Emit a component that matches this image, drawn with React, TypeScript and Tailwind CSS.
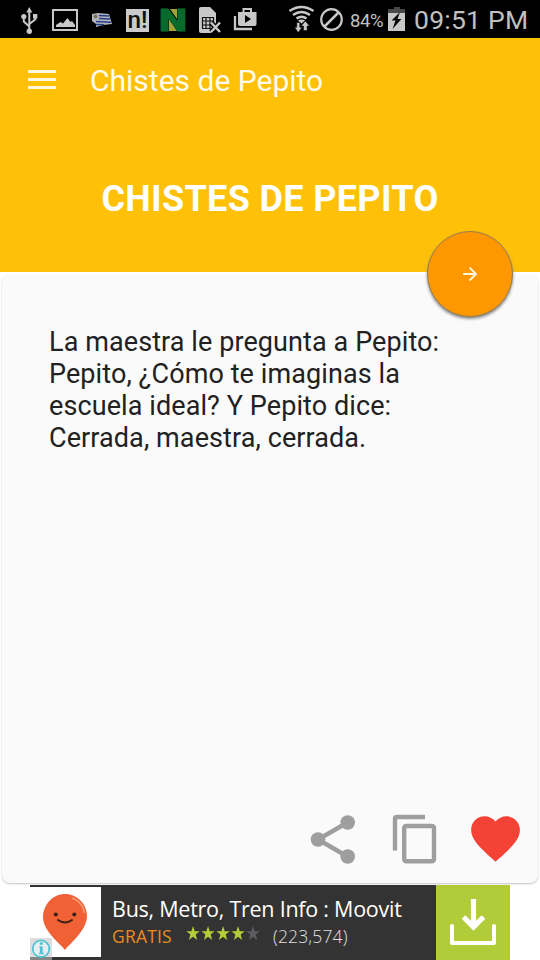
import type { ReactNode } from "react";

const GRAY = "#c8c8c8";

function StatusIcon({ x, w, children }: { x: number; w: number; children: ReactNode }) {
  return (
    <svg width={w} height={38} viewBox={`${x} 0 ${w} 38`} className="shrink-0">
      {children}
    </svg>
  );
}

function StatusBar() {
  return (
    <div className="flex h-[38px] w-full bg-black pl-4 font-[Roboto,sans-serif] text-[#c0c0c0]">
      <StatusIcon x={16} w={29}>
        <g fill="none" stroke={GRAY} strokeWidth="2">
          <path d="M29.300 12v20M23.800 17v4.500l5.500 5M35.200 17v2.500l-5.900 4.500" />
        </g>
        <g fill={GRAY}>
          <path d="M29.300 7l3 5.500h-6z" />
          <circle cx="23.800" cy="16.500" r="2.600" />
          <rect x="33" y="14" width="4.300" height="4.600" />
          <circle cx="29.300" cy="31.300" r="2.700" />
        </g>
      </StatusIcon>
      <StatusIcon x={45} w={40}>
        <rect x="53" y="10" width="24" height="20" fill="none" stroke={GRAY} strokeWidth="2" />
        <path d="M56 27v-2l4.500-3 2.500 1.500 4.500-5.500 3 4 1.500-1 3 4v2z" fill={GRAY} />
      </StatusIcon>
      <StatusIcon x={85} w={35}>
        <path d="M92 14l6-1 11 1 3 10-9 1-7 2 0-3-4-3z" fill="#b4b4bc" />
        <path d="M99 15.500l10 .5M99 18.500l11 .5M96 21.500l15 .8M96 24.500l8 .2" stroke="#263e86" strokeWidth="1.400" />
        <circle cx="95.500" cy="16.500" r="2" fill="#777260" />
      </StatusIcon>
      <StatusIcon x={120} w={35}>
        <rect x="126" y="9" width="23" height="23" fill="#cbcbcb" />
        <text x="127.500" y="28" fontSize="24" fontWeight="500" textLength="20" lengthAdjust="spacingAndGlyphs" fill="#111">n!</text>
      </StatusIcon>
      <StatusIcon x={155} w={38}>
        <path d="M170 9h7v10zM169 31V19l8 12z" fill="#a4a33b" />
        <text x="159" y="31" fontSize="31" fontWeight="900" textLength="28" lengthAdjust="spacingAndGlyphs" fill="#086b2c" stroke="#086b2c" strokeWidth=".8">N</text>
      </StatusIcon>
      <StatusIcon x={193} w={35}>
        <path d="M199 9q0-2 2-2h9l6 6v11l-5 9h-10q-2 0-2-2z" fill={GRAY} />
        <path d="M202.500 17.500h11v11h-11zM206 17v12M210 17v12M202 21h12M202 25h12" fill="none" stroke="#111" strokeWidth="1.200" />
        <path d="M211 22.500l9 9.500M220 22.500l-9 9.500" stroke="#000" strokeWidth="5" />
        <path d="M211 22.500l9 9.500M220 22.500l-9 9.500" stroke={GRAY} strokeWidth="2.500" />
      </StatusIcon>
      <StatusIcon x={228} w={35}>
        <path d="M235 16v13h17" fill="none" stroke={GRAY} strokeWidth="2.300" />
        <path fillRule="evenodd" d="M238 12h18.500v12q0 2-2 2h-14.500q-2 0-2-2zM245 15v8l6-4z" fill={GRAY} />
        <path d="M243.500 12V9h7.500v3" fill="none" stroke={GRAY} strokeWidth="2" />
      </StatusIcon>
      <StatusIcon x={263} w={87}>
        <g fill="none" stroke={GRAY} strokeWidth="2.500">
          <path d="M289.500 11q12-8 24 0M293 15q8.500-6 17 0M296.500 18.500q5-3.500 10 0" />
          <circle cx="331.500" cy="19.500" r="10.300" strokeWidth="2.200" />
          <path d="M324.500 26.500l14-14" />
        </g>
        <path d="M298 20.500q3.500-2 7 0l-3.500 3z" fill={GRAY} />
        <path d="M296.800 22.500h3v4.800h2.200l-3.700 5.200-3.700-5.200h2.200zM303.500 30.500h3.600v-4.500h2.400l-4.200-5-4.200 5h2.400z" fill={GRAY} stroke="#000" strokeWidth=".5" />
      </StatusIcon>
      <div className="w-[34px] shrink-0 whitespace-nowrap pt-[9px] text-[18.500px] leading-[24px] tracking-[-0.400px]">84%</div>
      <StatusIcon x={384} w={30}>
        <rect x="394" y="7" width="6" height="3" fill="#484848" />
        <rect x="388" y="9" width="17" height="22" fill={GRAY} />
        <rect x="388" y="9" width="17" height="4" fill="#484848" />
        <path d="M400 12l-8.500 8.500h4l-3 8.500 9-10h-4z" fill="#080808" />
      </StatusIcon>
      <div className="shrink-0 whitespace-nowrap pt-[4px] text-[26.500px] leading-[32px] tracking-[0.250px]">09:51 PM</div>
    </div>
  );
}

function Header() {
  return (
    <header className="h-[234px] bg-[#ffc107] font-[Roboto,sans-serif] text-white">
      <div className="flex h-[84px] items-center pl-7">
        <div className="mb-[2px] flex w-[62px] flex-col gap-[5px]">
          <i className="h-[3px] w-7 bg-[#fff8df]" />
          <i className="h-[3px] w-7 bg-[#fff8df]" />
          <i className="h-[3px] w-7 bg-[#fff8df]" />
        </div>
        <h1 className="mt-[2px] whitespace-nowrap text-[30px] leading-[36px] text-[#fffbed]">Chistes de Pepito</h1>
      </div>
      <h2 className="mt-[55px] whitespace-nowrap text-center text-[36px] font-bold leading-[44px] tracking-[0.350px]">CHISTES DE PEPITO</h2>
    </header>
  );
}

function JokeCard() {
  return (
    <main className="mx-0.5 mt-[3px] flex h-[608px] flex-col justify-between rounded-lg bg-[#fafafa] shadow-[0_1px_2px_#c4c4c4]">
      <p className="ml-[47px] mt-[51px] whitespace-nowrap font-[Roboto,sans-serif] text-[27px] leading-[32px] tracking-[0.090px] text-[#212121]">
        La maestra le pregunta a Pepito:<br />
        Pepito, ¿Cómo te imaginas la<br />
        escuela ideal? Y Pepito dice:<br />
        Cerrada, maestra, cerrada.
      </p>
      <div className="mb-4 flex h-[56px] justify-end pr-[14px]">
        <svg width="52" height="56" viewBox="308 811 52 56">
          <path d="M347.500 822.500L318 839.500l29.500 17" fill="none" stroke="#9e9e9e" strokeWidth="4.500" />
          <g fill="#9e9e9e">
            <circle cx="347.700" cy="822.500" r="7.300" />
            <circle cx="318" cy="839.500" r="7.300" />
            <circle cx="347.700" cy="856.500" r="7.300" />
          </g>
        </svg>
        <svg className="ml-7" width="56" height="56" viewBox="388 811 56 56">
          <path d="M395 850.500V819q0-2 2-2h28" fill="none" stroke="#9e9e9e" strokeWidth="4.400" />
          <rect x="404.200" y="826" width="29.800" height="35.300" rx="2" fill="none" stroke="#9e9e9e" strokeWidth="4.400" />
        </svg>
        <svg className="ml-[22px]" width="58" height="56" viewBox="466 811 58 56">
          <path transform="translate(466.250 808.900) scale(2.440 2.480)" fill="#f44336" d="M12 21.350l-1.450-1.320C5.400 15.360 2 12.280 2 8.500 2 5.420 4.420 3 7.500 3c1.740 0 3.410.81 4.500 2.090C13.090 3.810 14.760 3 16.500 3 19.580 3 22 5.420 22 8.500c0 3.780-3.400 6.860-8.550 11.540L12 21.350z" />
        </svg>
      </div>
    </main>
  );
}

const STAR = "M8 0l1.900 5.400h5.600L11 8.800l1.700 5.400L8 10.900l-4.700 3.300L5 8.800.5 5.400h5.600z";

function AdBanner() {
  return (
    <footer className="mx-[30px] mt-[2px] flex h-[75px] bg-[#333333] font-['Open_Sans',sans-serif]">
      <svg width="71" height="75" viewBox="30 885 71 75" className="shrink-0">
        <rect x="30" y="887" width="71" height="70" fill="#fff" />
        <path d="M65 950c-3-5-23-19-22-34 1-12 10-22 22-22s22 10 22 22c0 15-19 29-22 34z" fill="#f06235" />
        <path d="M72 898q11 4 12.500 15" fill="none" stroke="#ff9a79" strokeWidth="1.500" />
        <g fill="#382018"><circle cx="55.800" cy="914.500" r="2" /><circle cx="74.300" cy="914.500" r="2" /></g>
        <path d="M58 920q7 5 14 0" fill="none" stroke="#382018" strokeWidth="2" strokeLinecap="round" />
        <rect x="30" y="938" width="22" height="19" fill="#d9d9d9" fillOpacity=".9" />
        <rect x="30" y="957" width="22" height="3" fill="#858585" />
        <circle cx="41" cy="948.700" r="8.300" fill="#e8eeee" stroke="#4fc4d5" strokeWidth="1.800" />
        <path d="M41.300 946.500v7.500" fill="none" stroke="#4fc4d5" strokeWidth="2.800" />
        <path d="M39.300 947.200h2M39 953.500h4.800" stroke="#4fc4d5" strokeWidth="1.300" />
        <circle cx="41.300" cy="943.500" r="1.600" fill="#4fc4d5" />
      </svg>
      <div className="flex w-[335px] flex-col pl-3">
        <div className="-ml-px mt-[8px] whitespace-nowrap text-[21.500px] leading-[32px] tracking-[-0.250px] text-white">Bus, Metro, Tren Info : Moovit</div>
        <div className="flex h-[22px] items-center">
          <span className="-ml-px w-[74px] text-[17.500px] leading-[22px] tracking-[0.200px] text-[#ed8b20]">GRATIS</span>
          <svg className="-mt-1" width="87" height="18" viewBox="0 0 87 18">
            {[0, 1, 2, 3, 4].map((i) => (
              <path key={i} d={STAR} transform={`translate(${i * 15} 1) scale(.88 .98)`} fill={i < 4 ? "#b4ce38" : "#5d5e62"} />
            ))}
          </svg>
          <span className="text-[17.500px] leading-[22px] tracking-[0.150px] font-light text-[#e0e0e0]">(223,574)</span>
        </div>
      </div>
      <div className="w-[74px] shrink-0 bg-[#b2cc39]">
        <svg width="74" height="75" viewBox="436 885 74 75">
          <path d="M473.500 899v25M463.500 917l10 10 10-10" fill="none" stroke="#fff" strokeWidth="5.200" />
          <path d="M452 926v17h42v-17" fill="none" stroke="#fff" strokeWidth="4" strokeLinecap="round" strokeLinejoin="round" />
        </svg>
      </div>
    </footer>
  );
}

export default function App() {
  return (
    <div className="relative h-[960px] w-[540px] overflow-hidden bg-white">
      <StatusBar />
      <Header />
      <JokeCard />
      <AdBanner />
      <button aria-label="Siguiente" className="absolute left-[427px] top-[231px] flex h-[86px] w-[86px] items-center justify-center rounded-full border border-[#987b4a] bg-[#ff9800] shadow-[0px_2px_3px_#888888]">
        <svg width="18" height="18" viewBox="0 0 18 18" fill="none" stroke="#fff5dc" strokeWidth="1.900">
          <path d="M2 9h13M8.500 2.500L15 9l-6.500 6.500" />
        </svg>
      </button>
    </div>
  );
}
